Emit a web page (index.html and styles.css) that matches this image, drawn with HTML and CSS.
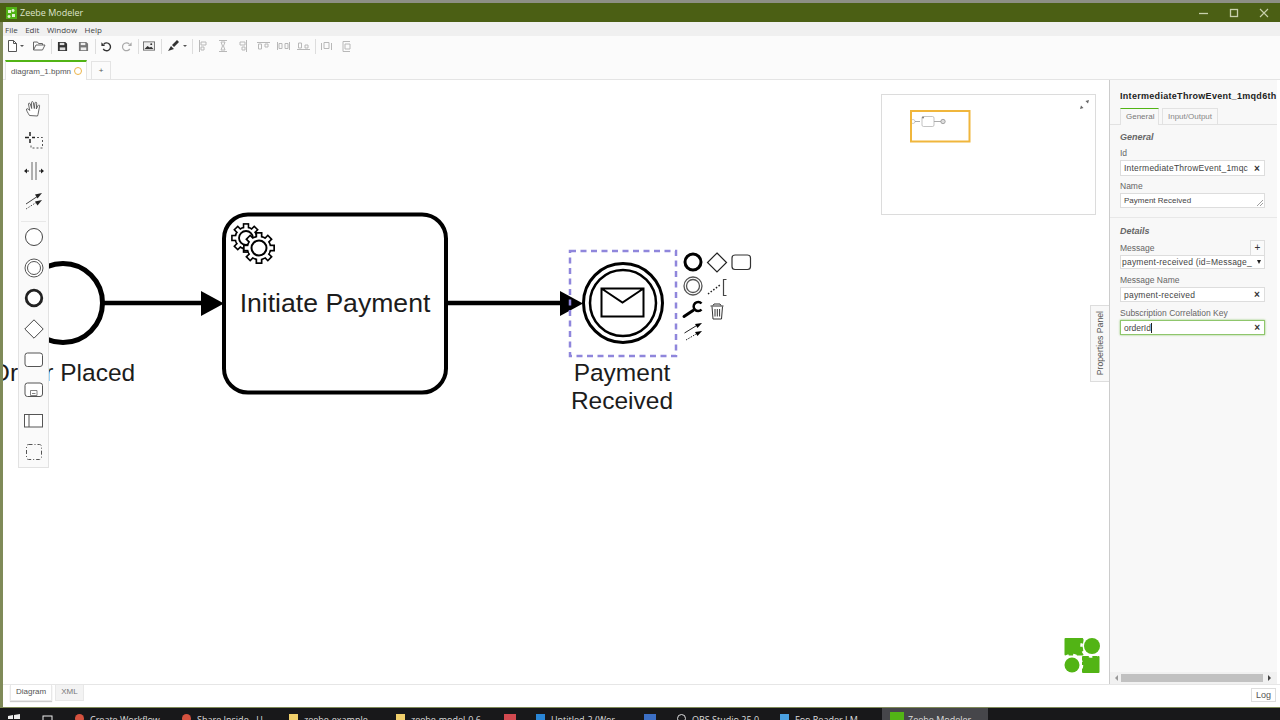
FILE: index.html
```html
<!DOCTYPE html>
<html lang="en">
<head>
  <meta charset="UTF-8">
  <title>Zeebe Modeler</title>
  <link rel="stylesheet" href="styles.css">
</head>
<body>
  <div class="window">
    <div class="titlebar">
      <svg class="app-icon" width="11" height="12" viewBox="0 0 11 12"><rect width="11" height="12" fill="#52b415"/><path d="M2 3h3v3H2zM7 2a1.5 1.5 0 1 0 .1 0M3 8a1.500 1.500 0 1 0 .1 0M6 7h3v3H6z" fill="#e4f2d5"/></svg>
      <span class="app-name">Zeebe Modeler</span>
      <div class="win-controls">
        <svg width="10" height="10" viewBox="0 0 10 10"><path d="M0 5.500h9" stroke="#c8d0ac" stroke-width="1.300"/></svg>
        <svg width="10" height="10" viewBox="0 0 10 10"><rect x="1.500" y="1.500" width="7" height="7" fill="none" stroke="#c8d0ac" stroke-width="1.300"/></svg>
        <svg width="10" height="10" viewBox="0 0 10 10"><path d="M1 1l8 8M9 1l-8 8" stroke="#c8d0ac" stroke-width="1.100"/></svg>
      </div>
    </div>

    <div class="menu">
      <span>File</span><span>Edit</span><span>Window</span><span>Help</span>
    </div>

    <div class="toolbar">
      <div class="tb-group">
        <div class="tb wide"><svg width="22" height="14" viewBox="0 0 22 14"><path d="M2.500 1.500h5l3 3v8h-8zM7.500 1.500v3h3" fill="#fff" stroke="#555"/><path d="M14 6h4l-2 2z" fill="#555"/></svg></div>
        <div class="tb"><svg width="14" height="12" viewBox="0 0 14 12"><path d="M1.500 10V2h4l1 1.500h4V5M1.500 10l2.500-5h9l-2.500 5z" fill="none" stroke="#666"/></svg></div>
      </div>
      <div class="tb-group spaced">
        <div class="tb"><svg width="11" height="11" viewBox="0 0 12 12"><path d="M1 1h8l2 2v8H1z" fill="#333"/><rect x="3" y="2" width="5" height="2.500" fill="#ddd"/><rect x="3" y="7" width="6" height="3" fill="#ddd"/></svg></div>
        <div class="tb"><svg width="11" height="11" viewBox="0 0 12 12"><path d="M1 1h8l2 2v8H1z" fill="#777"/><rect x="3" y="2" width="5" height="2.500" fill="#eee"/><rect x="3" y="7" width="6" height="3" fill="#eee"/></svg></div>
      </div>
      <div class="tb-group">
        <div class="tb"><svg width="13" height="13" viewBox="0 0 14 14"><path d="M4 4.500a4.200 4.200 0 1 1-.5 5" fill="none" stroke="#333" stroke-width="1.500"/><path d="M1.500 2.500v4h4z" fill="#333"/></svg></div>
        <div class="tb"><svg width="13" height="13" viewBox="0 0 14 14"><path d="M10 4.500a4.200 4.200 0 1 0 .5 5" fill="none" stroke="#aaa" stroke-width="1.300"/><path d="M12.500 2.500v4h-4z" fill="#aaa"/></svg></div>
      </div>
      <div class="tb-group">
        <div class="tb"><svg width="12" height="10" viewBox="0 0 16 12"><rect x=".5" y=".5" width="15" height="11" fill="#eee" stroke="#555"/><path d="M2 10l4-4 3 2 2-1 3 3z" fill="#333"/><circle cx="11" cy="3.500" r="1.300" fill="#333"/></svg></div>
      </div>
      <div class="tb-group">
        <div class="tb brush"><svg width="24" height="14" viewBox="0 0 24 14"><path d="M2 12l3-5 3 3zM6 6l5-5 2 2-5 5z" fill="#333"/><path d="M17 6h4l-2 2z" fill="#555"/></svg></div>
      </div>
      <div class="tb-group">
        <div class="tb"><svg class="align" width="10" height="12" viewBox="0 0 10 12"><path d="M1.500 0v12M3 2h5v3H3zM3 7h3v3H3z"/></svg></div>
        <div class="tb"><svg class="align" width="10" height="12" viewBox="0 0 10 12"><path d="M1 .5h8M1 11.500h8M3 2h4l-1.500 4L7 10H3l1.500-4z"/></svg></div>
        <div class="tb"><svg class="align" width="10" height="12" viewBox="0 0 10 12"><path d="M8.500 0v12M2 2h5v3H2zM4 7h3v3H4z"/></svg></div>
        <div class="tb"><svg class="align" width="13" height="10" viewBox="0 0 13 10"><path d="M0 1.500h13M1.500 3h3v5h-3zM8 3h3v3H8z"/></svg></div>
        <div class="tb"><svg class="align" width="13" height="10" viewBox="0 0 13 10"><path d="M.5 1v8M12.500 1v8M2 2.500h3v5H2zM8 2.500h3v5H8z"/></svg></div>
        <div class="tb"><svg class="align" width="13" height="10" viewBox="0 0 13 10"><path d="M0 8.500h13M1.500 2h3v5h-3zM8 4h3v3H8z"/></svg></div>
      </div>
      <div class="tb-group last">
        <div class="tb"><svg class="align" width="13" height="10" viewBox="0 0 13 10"><path d="M1.500 9V2M11.500 9V2M4 1.500h5v6H4z"/></svg></div>
        <div class="tb"><svg class="align" width="10" height="13" viewBox="0 0 10 13"><path d="M9 1.500H2v10h7M4 4h5v5H4z"/></svg></div>
      </div>
    </div>

    <div class="tabs">
      <div class="tab active">diagram_1.bpmn <span class="dirty"></span></div>
      <div class="tab add">+</div>
    </div>

    <div class="main">
      <div class="canvas">
        <svg class="diagram" width="1106" height="605" viewBox="3 80 1106 605">
          <defs>
            <g id="gear">
              <g fill="#000">
                <rect x="-3.500" y="-1" width="7" height="2" transform="scale(1 16)"/>
                <rect x="-3.500" y="-1" width="7" height="2" transform="rotate(45) scale(1 16)"/>
                <rect x="-3.500" y="-1" width="7" height="2" transform="rotate(90) scale(1 16)"/>
                <rect x="-3.500" y="-1" width="7" height="2" transform="rotate(135) scale(1 16)"/>
                <circle r="12.500"/>
              </g>
              <g fill="#fff">
                <rect x="-1.800" y="-1" width="3.600" height="2" transform="scale(1 14.300)"/>
                <rect x="-1.800" y="-1" width="3.600" height="2" transform="rotate(45) scale(1 14.300)"/>
                <rect x="-1.800" y="-1" width="3.600" height="2" transform="rotate(90) scale(1 14.300)"/>
                <rect x="-1.800" y="-1" width="3.600" height="2" transform="rotate(135) scale(1 14.300)"/>
                <circle r="10.800"/>
              </g>
              <circle r="7.500" fill="#fff" stroke="#000" stroke-width="2"/>
            </g>
          </defs>

          <!-- start event -->
          <circle cx="63" cy="303" r="39.500" fill="#fff" stroke="#000" stroke-width="5"/>
          <text class="label" x="63" y="381" text-anchor="middle">Order Placed</text>
          <path d="M104 303H205" stroke="#000" stroke-width="4.500"/>
          <path d="M201 291l23 12.500-23 12.500z" fill="#000"/>

          <!-- service task -->
          <rect x="224" y="214.500" width="222" height="178" rx="24" fill="#fff" stroke="#000" stroke-width="4"/>
          <use href="#gear" transform="translate(246 238) scale(.93)"/>
          <use href="#gear" transform="translate(259 248)"/>
          <text class="label task-label" x="335" y="312" text-anchor="middle">Initiate Payment</text>
          <path d="M446 303H565" stroke="#000" stroke-width="4.500"/>
          <path d="M560 291l23 12.500-23 12.500z" fill="#000"/>

          <!-- message throw event -->
          <circle cx="623" cy="303" r="39.500" fill="#fff" stroke="#000" stroke-width="3"/>
          <circle cx="623" cy="303" r="33" fill="#fff" stroke="#000" stroke-width="2.500"/>
          <path d="M601.500 288.500h42v28h-42zM601.500 288.500l21 14 21-14" fill="none" stroke="#000" stroke-width="2"/>
          <rect x="570" y="251" width="106" height="105" fill="none" stroke="#8f86dc" stroke-width="2.500" stroke-dasharray="6 4.500"/>
          <text class="label" x="622" y="381" text-anchor="middle">Payment</text>
          <text class="label" x="622" y="409" text-anchor="middle">Received</text>

          <!-- context pad -->
          <circle cx="693" cy="262" r="8" fill="#fff" stroke="#000" stroke-width="3"/>
          <path d="M717 253l9.500 9.500-9.500 9.500-9.500-9.500z" fill="#fff" stroke="#222" stroke-width="1.200"/>
          <rect x="732" y="255" width="18.500" height="14.500" rx="3" fill="#fff" stroke="#333" stroke-width="1.200"/>
          <circle cx="693" cy="286" r="9" fill="#fff" stroke="#555" stroke-width="1.300"/>
          <circle cx="693" cy="286" r="6.500" fill="#fff" stroke="#555" stroke-width="1.300"/>
          <path d="M708 294l12-9" stroke="#222" stroke-width="1.500" stroke-dasharray="1.500 1.800"/>
          <path d="M726.500 279.500h-3v16h3" fill="none" stroke="#444" stroke-width="1.200"/>
          <path d="M684 316.500l9-6" stroke="#000" stroke-width="3" stroke-linecap="round"/>
          <path d="M701.500 303.500A4.500 4.500 0 1 0 701.500 309.500" fill="none" stroke="#000" stroke-width="2.500"/>
          <path d="M710.500 306h13M713 305.500l1-1.500h6l1 1.500M712 306.500l1 12.500h8.500l1-12.500M715 309v7.500M717.300 309v7.500M719.600 309v7.500" fill="none" stroke="#333" stroke-width="1"/>
          <path d="M684.500 333l13-8" stroke="#222" stroke-width="1"/>
          <path d="M702 323l-7 1 2.500 4z" fill="#000"/>
          <path d="M686 340l11-6.500" stroke="#222" stroke-width="1" stroke-dasharray="1.500 1.200"/>
          <path d="M702 331l-7 1 2.500 4z" fill="#000"/>

          <!-- logo -->
          <rect x="1064.500" y="638" width="19" height="17.500" rx="1" fill="#52b415"/>
          <rect x="1082" y="656" width="17.500" height="17" rx="1" fill="#52b415"/>
          <circle cx="1092" cy="646" r="9.500" fill="#fff"/>
          <circle cx="1072" cy="665" r="9" fill="#fff"/>
          <circle cx="1092" cy="646" r="10.500" fill="none" stroke="#fff" stroke-width="2.500" stroke-dasharray="3.500 4.500"/>
          <circle cx="1072" cy="665" r="10" fill="none" stroke="#fff" stroke-width="2.500" stroke-dasharray="3.500 4.500"/>
          <circle cx="1092" cy="646" r="8" fill="#52b415"/>
          <circle cx="1072" cy="665" r="7.500" fill="#52b415"/>
        </svg>

        <div class="palette">
          <div class="tool"><svg width="18" height="18" viewBox="0 0 18 18"><path d="M4.500 15.500C3 13 1 10 1.500 9c.6-1 2 .2 3.200 1.500L3.500 4c0-1.300 1.500-1 1.800 0l1.400 4.500L6.500 2.500c0-1.200 1.600-1.200 1.800 0l1 6 .7-5.500c.2-1.200 1.700-1 1.700.2l-.4 5.800 1.800-3.500c.5-1 1.800-.5 1.500.6L13 14.500l-.5 1.500z" fill="#fff" stroke="#555" stroke-width=".9"/></svg></div>
          <div class="tool"><svg width="20" height="20" viewBox="0 0 20 20"><path d="M6 2v4M6 9v4M1 7.500h4M8 7.500h3" stroke="#222" stroke-width="1.500"/><path d="M13 7.500h5.500V18H7v-3" fill="none" stroke="#555" stroke-dasharray="2 2"/></svg></div>
          <div class="tool"><svg width="20" height="18" viewBox="0 0 20 18"><path d="M8 0v18M12 0v18" stroke="#555" stroke-width=".9"/><path d="M1 9h4M15 9h4" stroke="#222"/><path d="M0 9l3-2.500v5zM20 9l-3-2.500v5z" fill="#222"/></svg></div>
          <div class="tool"><svg width="18" height="18" viewBox="0 0 18 18"><path d="M1 12L13 4" stroke="#444"/><path d="M17 1l-7 1.500 2.500 4z" fill="#222"/><path d="M1 17l11-7" stroke="#555" stroke-dasharray="1.500 1.300"/><path d="M17 8l-7 1.500 2.500 4z" fill="#222"/></svg></div>
          <div class="tool-sep"></div>
          <div class="tool"><svg width="20" height="20" viewBox="0 0 20 20"><circle cx="10" cy="10" r="8.500" fill="#fff" stroke="#444"/></svg></div>
          <div class="tool"><svg width="20" height="20" viewBox="0 0 20 20"><circle cx="10" cy="10" r="9" fill="#fff" stroke="#555"/><circle cx="10" cy="10" r="6.500" fill="#fff" stroke="#555"/></svg></div>
          <div class="tool"><svg width="20" height="20" viewBox="0 0 20 20"><circle cx="10" cy="10" r="7.800" fill="#fff" stroke="#222" stroke-width="2.800"/></svg></div>
          <div class="tool"><svg width="20" height="20" viewBox="0 0 20 20"><path d="M10 .8l9.200 9.200-9.200 9.200L.8 10z" fill="#fff" stroke="#444"/></svg></div>
          <div class="tool"><svg width="20" height="16" viewBox="0 0 20 16"><rect x="1" y="1" width="17.500" height="13.500" rx="2.500" fill="#fff" stroke="#555"/></svg></div>
          <div class="tool"><svg width="20" height="16" viewBox="0 0 20 16"><rect x="1" y="1" width="17.500" height="13.500" rx="2.500" fill="#fff" stroke="#555"/><path d="M6.500 8.500h6.500v5H6.500zM8 11.500h3.500" fill="none" stroke="#666" stroke-width=".8"/></svg></div>
          <div class="tool"><svg width="20" height="14" viewBox="0 0 20 14"><rect x=".5" y=".5" width="18" height="12.500" fill="#fff" stroke="#555"/><path d="M5 .5V13" stroke="#555"/></svg></div>
          <div class="tool"><svg width="18" height="18" viewBox="0 0 18 18"><rect x="1.500" y="1.500" width="15" height="15" rx="2" fill="none" stroke="#555" stroke-dasharray="4 2 1 2"/></svg></div>
        </div>

        <div class="minimap">
          <svg width="213" height="119" viewBox="882 95 213 119">
            <circle cx="913" cy="121.500" r="2" fill="#fff" stroke="#aaa" stroke-width=".6"/>
            <path d="M915 121.500h5M934 121.500h7" stroke="#888" stroke-width=".7"/>
            <rect x="922" y="116.500" width="12" height="10" rx="1.500" fill="#fff" stroke="#aaa" stroke-width=".7"/>
            <circle cx="923" cy="117.500" r="1.100" fill="#888"/>
            <circle cx="943" cy="121.500" r="2.200" fill="#ddd" stroke="#888" stroke-width=".7"/>
            <rect x="911" y="111" width="58.500" height="30.500" fill="none" stroke="#f0b63c" stroke-width="2"/>
          </svg>
          <svg class="mini-toggle" width="9" height="9" viewBox="0 0 9 9"><path d="M0 9l3.500-1L1 5.500zM9 0L5.500 1 8 3.500z" fill="#666"/></svg>
        </div>

        <div class="props-toggle"><span>Properties Panel</span></div>
      </div>

      <div class="props">
        <div class="props-title">IntermediateThrowEvent_1mqd6th</div>
        <div class="props-tabs">
          <div class="props-tab active">General</div>
          <div class="props-tab">Input/Output</div>
        </div>
        <div class="props-group first">
          <div class="group-head">General</div>
          <div class="label-row">Id</div>
          <div class="field tall spaced-text"><span class="value">IntermediateThrowEvent_1mqc</span><span class="clear">×</span></div>
          <div class="label-row">Name</div>
          <div class="field name-field">
            <span class="value">Payment Received</span>
            <svg class="resize" width="6" height="6" viewBox="0 0 6 6"><path d="M0 6l6-6M3 6l3-3" stroke="#888" stroke-width=".8"/></svg>
          </div>
        </div>
        <div class="props-group details">
          <div class="group-head">Details</div>
          <div class="label-row with-btn"><span>Message</span><span class="add-btn">+</span></div>
          <div class="field select spaced-text"><span class="value">payment-received (id=Message_</span><span class="arrow"></span></div>
          <div class="label-row">Message Name</div>
          <div class="field spaced-text"><span class="value">payment-received</span><span class="clear">×</span></div>
          <div class="label-row">Subscription Correlation Key</div>
          <div class="field focused"><span class="value">orderId<i class="caret"></i></span><span class="clear">×</span></div>
        </div>
        <div class="scrollbar">
          <span class="sb-left"></span>
          <span class="sb-thumb"></span>
          <span class="sb-right"></span>
        </div>
      </div>
    </div>

    <div class="bottombar">
      <div class="view-btn active">Diagram</div>
      <div class="view-btn">XML</div>
      <div class="log-btn">Log</div>
    </div>
  </div>

  <div class="taskbar">
    <div class="pin start"><svg width="12" height="12" viewBox="0 0 12 12"><path d="M0 2l5-1v4H0zM6 1l6-1v5H6z" fill="#eee"/></svg></div>
    <div class="pin view"><svg width="12" height="12" viewBox="0 0 12 12"><rect x="1" y="2" width="9" height="9" fill="none" stroke="#eee"/></svg></div>
    <div class="task"><i class="dot chrome"></i>Create Workflow</div>
    <div class="task"><i class="dot chrome"></i>Share Inside - U</div>
    <div class="task"><i class="dot folder"></i>zeebe-example</div>
    <div class="task"><i class="dot folder"></i>zeebe-model-0.6</div>
    <div class="pin mail"><i class="dot mail-icon"></i></div>
    <div class="task"><i class="dot code"></i>Untitled-2 (Wor</div>
    <div class="pin blue"><i class="dot blue-icon"></i></div>
    <div class="task narrow"><i class="dot clock"></i>OBS Studio 25.0</div>
    <div class="task narrow"><i class="dot doc"></i>Foo Reader I M</div>
    <div class="task current"><i class="dot zeebe"></i>Zeebe Modeler</div>
  </div>
</body>
</html>
```

FILE: styles.css
```css
html, body {
  margin: 0;
  padding: 0;
}
body {
  width: 1280px;
  height: 720px;
  overflow: hidden;
  display: flex;
  flex-direction: column;
  font-family: "Liberation Sans", Arial, sans-serif;
  background: #fff;
  color: #333;
}
.window {
  flex: 1;
  min-height: 0;
  display: flex;
  flex-direction: column;
  border-left: 3px solid #7f8a58;
}

/* title bar and menu */
.titlebar {
  height: 19px;
  margin-left: -3px;
  border-top: 3px solid #8d8f85;
  background: #4b5f14;
  display: flex;
  align-items: center;
  color: #dfe4cc;
  font-family: "Open Sans", sans-serif;
  font-size: 9px;
  flex-shrink: 0;
}
.app-icon {
  margin-left: 6px;
}
.app-name {
  margin-left: 3px;
}
.win-controls {
  margin-left: auto;
  display: flex;
  gap: 20px;
  margin-right: 11px;
}
.menu {
  height: 14px;
  flex-shrink: 0;
  background: #f0f0f0;
  display: flex;
  align-items: center;
  gap: 7.500px;
  padding-left: 2px;
  font-family: "Open Sans", sans-serif;
  font-size: 8px;
  color: #444;
}

/* toolbar */
.toolbar {
  height: 24px;
  padding-bottom: 4px;
  box-sizing: border-box;
  flex-shrink: 0;
  background: #fbfbfb;
  display: flex;
  align-items: center;
}
.tb-group {
  display: flex;
  height: 15px;
  padding-right: 2px;
  border-right: 1px solid #ddd;
  align-items: center;
}
.tb-group.spaced {
  gap: 1px;
}
.tb-group.last {
  border-right: none;
}
.tb {
  width: 20px;
  display: flex;
  justify-content: center;
  align-items: center;
}
.tb.wide {
  width: 26px;
  justify-content: flex-start;
  padding-left: 3px;
  box-sizing: border-box;
}
.tb.brush {
  width: 28px;
  justify-content: flex-start;
  padding-left: 4px;
  box-sizing: border-box;
}
.align path {
  fill: none;
  stroke: #b8b8b8;
  stroke-width: 1;
}

/* file tabs */
.tabs {
  height: 20px;
  flex-shrink: 0;
  display: flex;
  align-items: flex-end;
  padding-left: 2px;
  gap: 4px;
  background: #fbfbfb;
  border-bottom: 1px solid #e4e4e4;
  box-sizing: border-box;
}
.tab {
  height: 18px;
  box-sizing: border-box;
  border: 1px solid #e4e4e4;
  border-bottom: none;
  font-size: 8px;
  color: #555;
  display: flex;
  align-items: center;
}
.tab.active {
  width: 82px;
  height: 20px;
  margin-bottom: -1px;
  background: #fff;
  border-top: 2px solid #52b415;
  padding-left: 5px;
  gap: 3px;
}
.tab.add {
  width: 20px;
  justify-content: center;
}
.dirty {
  width: 6px;
  height: 6px;
  border: 1px solid #ecb54a;
  border-radius: 50%;
}

/* canvas */
.main {
  flex: 1;
  min-height: 0;
  display: flex;
  border-bottom: 1px solid #e6e6e6;
}
.canvas {
  position: relative;
  flex: 1;
  overflow: hidden;
  background: #fff;
}
.diagram {
  display: block;
}
.label {
  font-family: "Liberation Sans", Arial, sans-serif;
  font-size: 24.500px;
  fill: #1c1c1c;
}
.task-label {
  font-size: 26.600px;
}
.palette {
  position: absolute;
  left: 15px;
  top: 14px;
  width: 31px;
  box-sizing: border-box;
  background: #fafafa;
  border: 1px solid #e2e2e2;
  display: flex;
  flex-direction: column;
}
.tool {
  height: 30.670px;
  display: flex;
  align-items: center;
  justify-content: center;
}
.tool:first-child {
  margin-top: -1px;
}
.tool-sep {
  height: 1px;
  margin: 4px 2px 0;
  background: #e8e8e8;
}
.minimap {
  position: absolute;
  left: 878px;
  top: 14px;
  width: 213px;
  height: 119px;
  border: 1px solid #dcdcdc;
  background: #fff;
}
.minimap svg {
  display: block;
}
.minimap .mini-toggle {
  position: absolute;
  right: 6px;
  top: 5px;
}
.props-toggle {
  position: absolute;
  right: 0;
  top: 225px;
  width: 19px;
  height: 77px;
  box-sizing: border-box;
  background: #f8f8f8;
  border: 1px solid #ddd;
  border-right: none;
  display: flex;
  align-items: center;
  justify-content: center;
}
.props-toggle span {
  writing-mode: vertical-rl;
  transform: rotate(180deg);
  font-size: 8.700px;
  color: #555;
  white-space: nowrap;
}

/* properties panel */
.props {
  width: 168px;
  margin-right: 3px;
  box-sizing: border-box;
  background: #f8f8f8;
  border-left: 1px solid #ccc;
  display: flex;
  flex-direction: column;
  overflow: hidden;
}
.props-title {
  margin: 9px 0 0 10px;
  line-height: 14px;
  font-size: 9px;
  font-weight: bold;
  letter-spacing: .3px;
  white-space: nowrap;
  overflow: hidden;
  color: #222;
}
.props-tabs {
  margin-top: 5px;
  height: 16px;
  display: flex;
  gap: 3px;
  padding-left: 10px;
  border-bottom: 1px solid #e2e2e2;
}
.props-tab {
  height: 16px;
  padding: 0 5px;
  box-sizing: border-box;
  border: 1px solid #e2e2e2;
  border-bottom: none;
  font-size: 8px;
  line-height: 15px;
  color: #888;
}
.props-tab.active {
  height: 17px;
  width: 39px;
  background: #f8f8f8;
  border-top: 1px solid #52b415;
  color: #777;
}
.props-group {
  padding: 7px 0 0 10px;
  width: 145px;
  box-sizing: content-box;
}
.props-group.first {
  padding: 6px 12px 9px 10px;
  width: auto;
  border-bottom: 1px solid #e8e8e8;
}
.group-head {
  font-size: 9px;
  line-height: 12px;
  font-weight: bold;
  font-style: italic;
  color: #666;
}
.label-row {
  margin-top: 4px;
  line-height: 12px;
  font-size: 8.500px;
  color: #666;
}
.details .label-row {
  margin-top: 5px;
}
.details .label-row.with-btn {
  margin-top: 3px;
  height: 16px;
  display: flex;
  justify-content: space-between;
  align-items: center;
}
.add-btn {
  width: 15px;
  height: 16px;
  box-sizing: border-box;
  border: 1px solid #ddd;
  background: #fafafa;
  text-align: center;
  line-height: 13px;
  font-size: 10px;
  color: #333;
}
.field {
  position: relative;
  height: 15px;
  box-sizing: border-box;
  margin-top: 1px;
  padding-left: 3px;
  display: flex;
  align-items: center;
  background: #fff;
  border: 1px solid #ddd;
  font-size: 8.500px;
  color: #444;
}
.field.tall {
  height: 16px;
}
.field.name-field {
  font-size: 8px;
}
.field.select {
  margin: -1px 0 0;
  height: 14px;
  padding-left: 1px;
}
.spaced-text {
  letter-spacing: .22px;
}
.value {
  white-space: nowrap;
}
.clear {
  position: absolute;
  right: 4px;
  font-size: 10px;
  font-weight: bold;
  color: #333;
}
.arrow {
  position: absolute;
  right: 3px;
  top: 4px;
  border-left: 2.500px solid transparent;
  border-right: 2.500px solid transparent;
  border-top: 4px solid #222;
}
.resize {
  position: absolute;
  right: 1px;
  bottom: 1px;
}
.field.focused {
  border-color: #8fc66c;
  box-shadow: 0 0 2px #8fc66c;
}
.caret {
  display: inline-block;
  width: 1px;
  height: 10px;
  background: #222;
  vertical-align: -2px;
}
.scrollbar {
  margin-top: auto;
  height: 12px;
  flex-shrink: 0;
  display: flex;
  align-items: center;
  background: #f1f1f1;
}
.sb-left {
  margin: 0 3px 0 5px;
  border-top: 3px solid transparent;
  border-bottom: 3px solid transparent;
  border-right: 3px solid #999;
}
.sb-thumb {
  width: 142px;
  height: 8px;
  background: #c1c1c1;
}
.sb-right {
  margin-left: 5px;
  border-top: 3px solid transparent;
  border-bottom: 3px solid transparent;
  border-left: 3px solid #444;
}

/* bottom bar */
.bottombar {
  height: 22px;
  flex-shrink: 0;
  display: flex;
  gap: 3px;
  padding-left: 7px;
  background: #fff;
  border-bottom: 1px solid #7f8a58;
}
.view-btn {
  height: 15px;
  padding: 0 5px;
  background: #f3f3f3;
  border: 1px solid #e8e8e8;
  border-top: none;
  font-size: 8px;
  line-height: 14px;
  color: #777;
}
.view-btn.active {
  background: #fff;
  color: #555;
  box-shadow: 0 1px 1px #ccc;
}
.log-btn {
  margin: 3px 4px 0 auto;
  width: 25px;
  height: 14px;
  box-sizing: border-box;
  border: 1px solid #ddd;
  text-align: center;
  font-size: 9px;
  line-height: 13px;
  color: #555;
}

/* windows taskbar, cut off by the bottom of the recording */
.taskbar {
  height: 12px;
  flex-shrink: 0;
  background: #18181a;
  display: flex;
  overflow: hidden;
  color: #ddd;
  font-family: "Open Sans", sans-serif;
  font-size: 9px;
  line-height: 12px;
}
.pin {
  height: 12px;
  padding-top: 6px;
  display: flex;
  justify-content: center;
}
.pin.start { width: 28px; }
.pin.view { width: 40px; }
.pin.mail { width: 22px; margin: 0 8px 0 3px; }
.pin.blue { width: 28px; margin-right: 6px; }
.task {
  width: 107px;
  padding: 6px 0 0 7px;
  box-sizing: border-box;
  display: flex;
  gap: 6px;
  white-space: nowrap;
}
.task.narrow { width: 103px; }
.task.current {
  width: 106px;
  margin-left: 6px;
  background: #46464a;
  padding-left: 8px;
  gap: 4px;
}
.dot {
  display: block;
  width: 9px;
  height: 9px;
  flex-shrink: 0;
}
.chrome { background: #d5523f; border-radius: 50%; }
.folder { background: #f0cf6b; }
.mail-icon { background: #d24a50; width: 12px; }
.code { background: #2a86d6; }
.blue-icon { background: #3c6fc4; width: 12px; }
.clock { border: 1px solid #ddd; border-radius: 50%; box-sizing: border-box; }
.doc { background: #4aa0e0; }
.zeebe { background: #52b415; width: 14px; height: 12px; margin-top: -2px; }
```
